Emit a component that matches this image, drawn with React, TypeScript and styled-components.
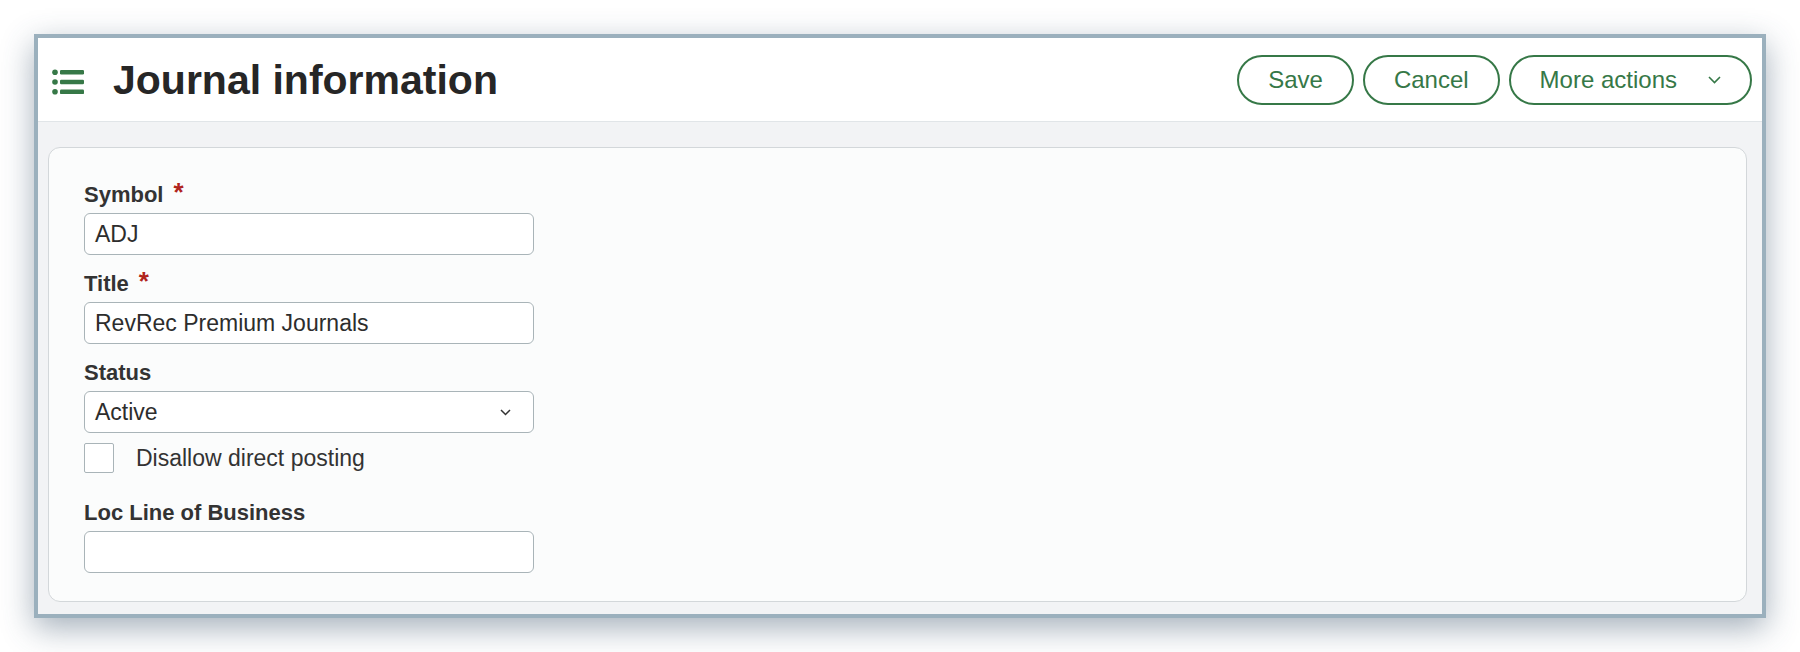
import styled, { createGlobalStyle } from "styled-components";

const GlobalStyle = createGlobalStyle`
  body {
    margin: 0;
    background: #ffffff;
    font-family: "Liberation Sans", Arial, sans-serif;
  }
`;

const Page = styled.div`
  padding: 34px 34px 34px 34px;
`;

const Frame = styled.div`
  box-sizing: border-box;
  width: 1732px;
  height: 584px;
  border: 4px solid #9bb0bd;
  background: #f2f3f5;
  box-shadow: 0 10px 30px rgba(55, 80, 105, 0.45);
  display: flex;
  flex-direction: column;
`;

const Header = styled.header`
  box-sizing: border-box;
  height: 84px;
  flex: none;
  background: #ffffff;
  border-bottom: 1px solid #e1e5e8;
  display: flex;
  align-items: center;
  padding: 0 10px 0 14px;
`;

const MenuIcon = styled.svg`
  flex: none;
  margin-top: 4px;
`;

const PageTitle = styled.h1`
  margin: 0 0 0 29px;
  font-size: 41px;
  line-height: 48px;
  font-weight: 700;
  color: #262626;
  flex: 1;
`;

const Actions = styled.div`
  display: flex;
  gap: 9px;
`;

const PillButton = styled.button`
  box-sizing: border-box;
  height: 50px;
  padding: 0 29px;
  border: 2.5px solid #367847;
  border-radius: 25px;
  background: #ffffff;
  color: #367847;
  font-family: "Liberation Sans", Arial, sans-serif;
  font-size: 24px;
  display: flex;
  align-items: center;
  gap: 31px;
  cursor: pointer;
`;

const Body = styled.div`
  flex: 1;
  padding: 25px 15px 12px 10px;
  display: flex;
`;

const Card = styled.section`
  box-sizing: border-box;
  flex: 1;
  background: #fbfcfc;
  border: 1px solid #d3d7da;
  border-radius: 12px;
  padding: 34px 35px 0 35px;
  display: flex;
  flex-direction: column;
`;

const Field = styled.div<{ gapAfter?: number }>`
  width: 450px;
  display: flex;
  flex-direction: column;
  margin-bottom: ${(p) => p.gapAfter ?? 16}px;
`;

const Label = styled.label`
  height: 26px;
  line-height: 26px;
  font-size: 22px;
  font-weight: 700;
  color: #333333;
  margin-bottom: 5px;
  display: flex;
`;

const Required = styled.span`
  color: #b0241c;
  font-size: 26px;
  line-height: 20px;
  margin-left: 10px;
`;

const TextBox = styled.div`
  box-sizing: border-box;
  height: 42px;
  border: 1px solid #a9b4b8;
  border-radius: 6px;
  background: #ffffff;
  padding: 0 10px;
  display: flex;
  align-items: center;
  justify-content: space-between;
  font-size: 23px;
  color: #2d2d2d;
`;

const Chevron = styled.svg`
  flex: none;
  margin-right: 12px;
`;

const CheckRow = styled.div`
  display: flex;
  align-items: center;
  gap: 22px;
  margin-bottom: 27px;
`;

const CheckBox = styled.span`
  box-sizing: border-box;
  width: 30px;
  height: 30px;
  border: 1px solid #a9b4b8;
  border-radius: 2px;
  background: #ffffff;
`;

const CheckLabel = styled.span`
  font-size: 23px;
  color: #333333;
`;

const ListIcon = () => (
  <MenuIcon width="32" height="26" viewBox="0 0 32 26">
    <g fill="#367847">
      <circle cx="3" cy="3.2" r="2.8" />
      <circle cx="3" cy="13" r="2.8" />
      <circle cx="3" cy="22.8" r="2.8" />
      <rect x="8" y="0.9" width="24" height="4.6" rx="1.2" />
      <rect x="8" y="10.7" width="24" height="4.6" rx="1.2" />
      <rect x="8" y="20.5" width="24" height="4.6" rx="1.2" />
    </g>
  </MenuIcon>
);

export default function App() {
  return (
    <>
      <GlobalStyle />
      <Page>
        <Frame>
          <Header>
            <ListIcon />
            <PageTitle>Journal information</PageTitle>
            <Actions>
              <PillButton>Save</PillButton>
              <PillButton>Cancel</PillButton>
              <PillButton>
                More actions
                <svg width="13" height="8" viewBox="0 0 13 8">
                  <path d="M1 1l5.5 5.5L12 1" fill="none" stroke="#367847" strokeWidth="1.6" />
                </svg>
              </PillButton>
            </Actions>
          </Header>
          <Body>
            <Card>
              <Field>
                <Label>
                  Symbol<Required>*</Required>
                </Label>
                <TextBox>ADJ</TextBox>
              </Field>
              <Field>
                <Label>
                  Title<Required>*</Required>
                </Label>
                <TextBox>RevRec Premium Journals</TextBox>
              </Field>
              <Field gapAfter={10}>
                <Label>Status</Label>
                <TextBox>
                  Active
                  <Chevron width="11" height="7" viewBox="0 0 11 7">
                    <path d="M1 1l4.5 4.5L10 1" fill="none" stroke="#333" strokeWidth="1.5" />
                  </Chevron>
                </TextBox>
              </Field>
              <CheckRow>
                <CheckBox />
                <CheckLabel>Disallow direct posting</CheckLabel>
              </CheckRow>
              <Field>
                <Label>Loc Line of Business</Label>
                <TextBox />
              </Field>
            </Card>
          </Body>
        </Frame>
      </Page>
    </>
  );
}
